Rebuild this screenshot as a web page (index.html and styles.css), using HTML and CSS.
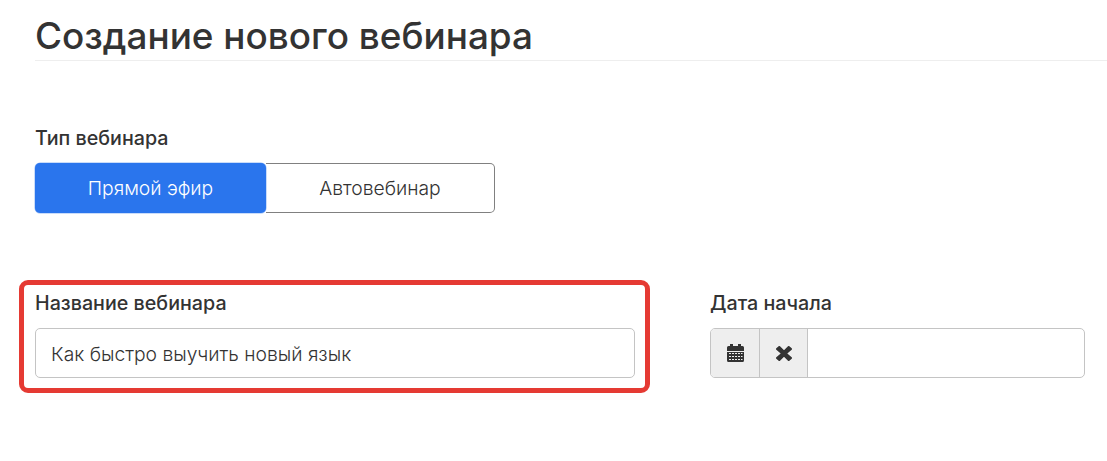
FILE: index.html
```html
<!DOCTYPE html>
<html lang="ru">
<head>
<meta charset="utf-8">
<title>Создание нового вебинара</title>
<link rel="stylesheet" href="styles.css">
</head>
<body>
<main class="page">
  <h1 class="title">Создание нового вебинара</h1>
  <section class="type-group">
    <div class="label">Тип вебинара</div>
    <div class="switch">
      <div class="switch-opt active">Прямой эфир</div>
      <div class="switch-opt">Автовебинар</div>
    </div>
  </section>
  <section class="fields">
    <div class="field name-field">
      <div class="label">Название вебинара</div>
      <div class="input name-input">Как быстро выучить новый язык</div>
      <div class="highlight"></div>
    </div>
    <div class="field date-field">
      <div class="label">Дата начала</div>
      <div class="input date-input">
        <span class="addon">
          <svg width="17" height="18" viewBox="0 0 17 18"><path fill="#333" d="M3 0h3v2h5V0h3v2h1.500A1.500 1.500 0 0 1 17 3.500V7H0V3.500A1.500 1.500 0 0 1 1.500 2H3z"/><path fill="#333" fill-rule="evenodd" d="M0 8h17v8.500a1.500 1.500 0 0 1-1.500 1.500h-14A1.500 1.500 0 0 1 0 16.500zM2 9v1h2V9zm3 0v1h2V9zm3 0v1h2V9zm3 0v1h2V9zm3 0v1h1.500V9zM2 12v1h2v-1zm3 0v1h2v-1zm3 0v1h2v-1zm3 0v1h2v-1zm3 0v1h1.500v-1zM2 15v1h2v-1zm3 0v1h2v-1zm3 0v1h2v-1zm3 0v1h2v-1zm3 0v1h1.500v-1z"/></svg>
        </span>
        <span class="addon">
          <svg width="16" height="15" viewBox="0 0 16 15"><path fill="#333" d="M4 .3 8 4.200 12 .3a1 1 0 0 1 1.400 0l2.300 2a1 1 0 0 1 0 1.400L11.300 7.500l4.400 3.800a1 1 0 0 1 0 1.400l-2.300 2a1 1 0 0 1-1.400 0L8 10.800 4 14.700a1 1 0 0 1-1.400 0L.3 12.700a1 1 0 0 1 0-1.400L4.700 7.500.3 3.700a1 1 0 0 1 0-1.400L2.600.3A1 1 0 0 1 4 .3z"/></svg>
        </span>
      </div>
    </div>
  </section>
</main>
</body>
</html>
```
FILE: styles.css
```css
* { box-sizing: border-box; }
html, body { margin: 0; padding: 0; background: #fff; }
body { font-family: Inter, "Noto Sans", sans-serif; color: #333; overflow: hidden; }
.page { width: 1107px; height: 461px; padding: 12px 0 0 35px; }
.title {
  margin: 0;
  height: 49px;
  font-size: 36.9px;
  line-height: 48px;
  font-weight: 500;
  color: #333;
  border-bottom: 1px solid #eee;
}
.type-group { margin-top: 67px; }
.label { font-size: 19.7px; line-height: 20px; font-weight: 500; color: #333; }
.switch { display: flex; width: 460px; height: 50px; margin-top: 15px; }
.switch-opt {
  flex: 1;
  display: flex;
  align-items: center;
  justify-content: center;
  font-size: 19.3px;
  font-weight: 300;
  border: 1px solid #808080;
  border-left: 0;
  border-radius: 0 5px 5px 0;
}
.switch-opt.active {
  flex: 0 0 231px;
  background: #2a75ed;
  border: 0;
  border-radius: 5px;
  box-shadow: 0 0 0 0.5px rgba(42, 117, 237, 0.5);
  color: #fff;
}
.fields { display: flex; gap: 75px; margin-top: 80px; }
.field { position: relative; }
.name-field { width: 600px; }
.date-field { width: 375px; }
.input {
  margin-top: 15px;
  height: 50px;
  border: 1px solid #c4c4c4;
  border-radius: 5px;
  background: #fff;
  font-size: 19.3px;
  font-weight: 300;
}
.name-input { display: flex; align-items: center; padding: 2px 0 0 15px; }
.date-input { display: flex; overflow: hidden; }
.addon {
  display: flex;
  align-items: center;
  justify-content: center;
  width: 48.5px;
  padding-left: 1px;
  background: #eee;
  border-right: 1px solid #c4c4c4;
}
.highlight {
  position: absolute;
  left: -16px;
  top: -13px;
  width: 631px;
  height: 113px;
  border: 5px solid #e53a33;
  border-radius: 9px;
}
```
